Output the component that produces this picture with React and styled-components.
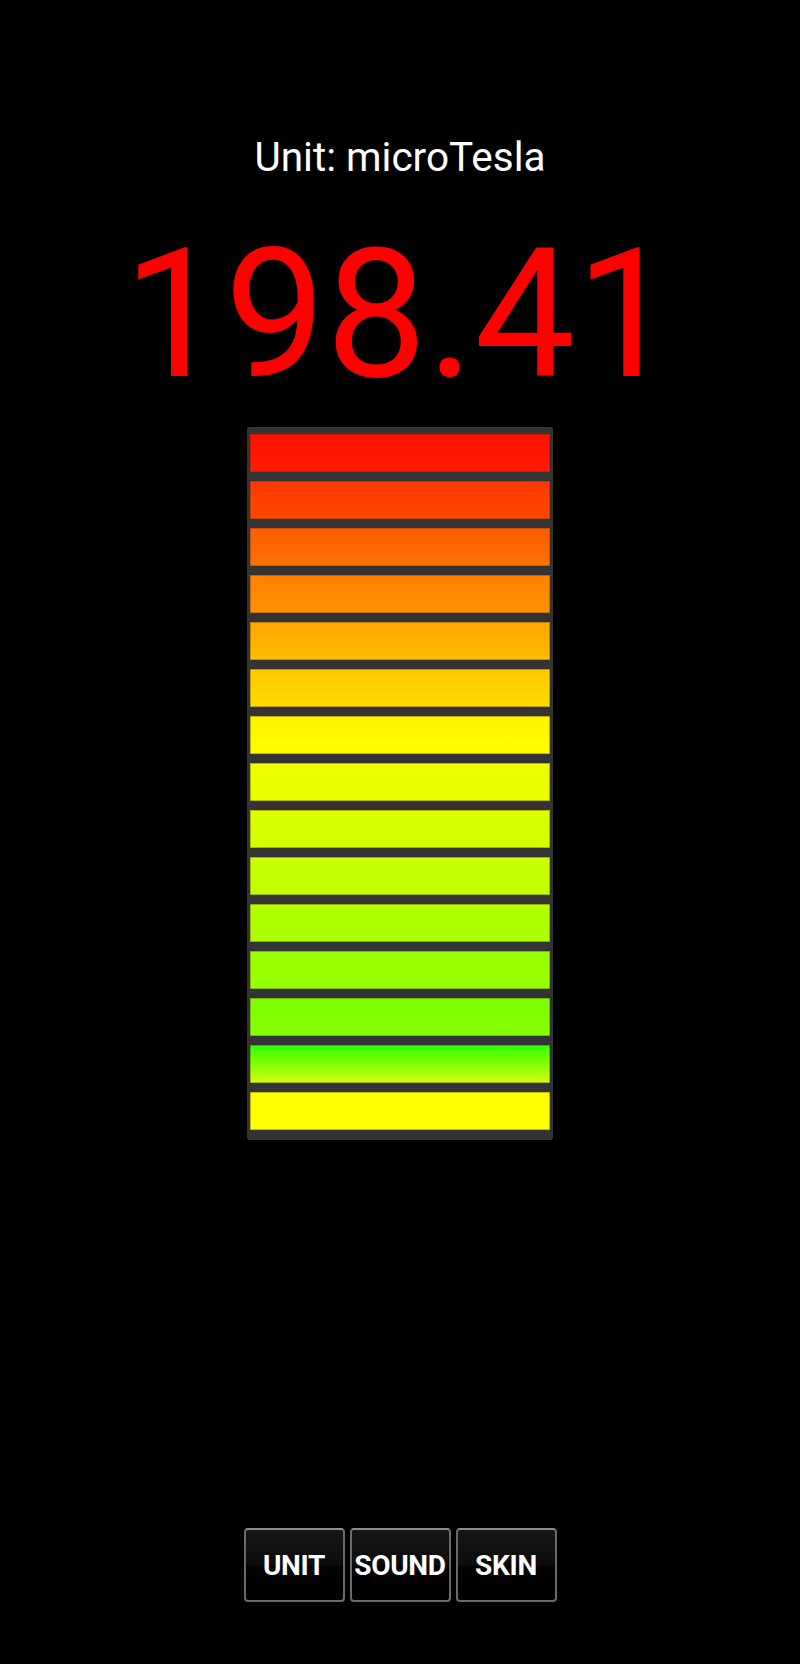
import React from "react";
import styled, { createGlobalStyle } from "styled-components";

const GlobalStyle = createGlobalStyle`
  html, body {
    margin: 0;
    padding: 0;
    background: #000;
  }
  body {
    font-family: Roboto, "Liberation Sans", sans-serif;
  }
`;

const levels = [
  { top: "#ff0e00", bottom: "#ff1c00" },
  { top: "#ff3800", bottom: "#ff4800" },
  { top: "#ff5c00", bottom: "#ff7200" },
  { top: "#ff8000", bottom: "#ff9200" },
  { top: "#ffa600", bottom: "#ffbe00" },
  { top: "#ffc800", bottom: "#ffdc00" },
  { top: "#fff200", bottom: "#ffff00" },
  { top: "#eeff00", bottom: "#e8ff00" },
  { top: "#daff00", bottom: "#d2ff00" },
  { top: "#c8ff00", bottom: "#c0ff00" },
  { top: "#b2ff00", bottom: "#aaff00" },
  { top: "#9cff00", bottom: "#94ff00" },
  { top: "#7cff00", bottom: "#86ff00" },
  { top: "#30ff00", bottom: "#d4ff10" },
  { top: "#ffff00", bottom: "#ffff00" },
];

export default function App() {
  return (
    <>
      <GlobalStyle />
      <Screen>
        <UnitLabel>Unit: microTesla</UnitLabel>
        <Reading>198.41</Reading>
        <Meter>
          {levels.map((lvl, i) => (
            <Segment key={i} $top={lvl.top} $bottom={lvl.bottom} />
          ))}
        </Meter>
        <Toolbar>
          <ToolButton>UNIT</ToolButton>
          <ToolButton>SOUND</ToolButton>
          <ToolButton>SKIN</ToolButton>
        </Toolbar>
      </Screen>
    </>
  );
}

const Screen = styled.div`
  min-height: 1664px;
  display: flex;
  flex-direction: column;
  align-items: center;
  background: #000;
  box-sizing: border-box;
  padding-top: 132px;
`;

const UnitLabel = styled.div`
  font-family: Roboto, "Liberation Sans", sans-serif;
  font-size: 40.5px;
  line-height: 50px;
  color: #fff;
`;

const Reading = styled.div`
  margin-top: 43px;
  font-family: Roboto, "Liberation Sans", sans-serif;
  font-size: 180px;
  line-height: 180px;
  color: #ff0000;
`;

const Meter = styled.div`
  margin-top: 22px;
  width: 306px;
  box-sizing: border-box;
  padding: 7px 3px 10px;
  background: #333333;
  border-radius: 2px;
  display: flex;
  flex-direction: column;
  gap: 9px;
`;

const Segment = styled.div`
  height: 38px;
  border-radius: 1px;
  background: linear-gradient(${(p) => p.$top}, ${(p) => p.$bottom});
  box-shadow: inset 0 0 0 1px rgba(90, 50, 0, 0.35);
`;

const Toolbar = styled.div`
  margin-top: auto;
  margin-bottom: 62px;
  display: flex;
  gap: 5px;
`;

const ToolButton = styled.button`
  width: 101px;
  height: 74px;
  padding: 0;
  box-sizing: border-box;
  border: 2px solid #6a6a6a;
  border-top-color: #8c8c8c;
  border-radius: 4px;
  background: linear-gradient(#161616 0%, #0c0c0c 50%, #020202 52%, #000 100%);
  color: #fff;
  font-family: Roboto, "Liberation Sans", sans-serif;
  font-weight: 700;
  font-size: 28px;
  letter-spacing: -0.3px;
  display: flex;
  align-items: center;
  justify-content: center;
`;
